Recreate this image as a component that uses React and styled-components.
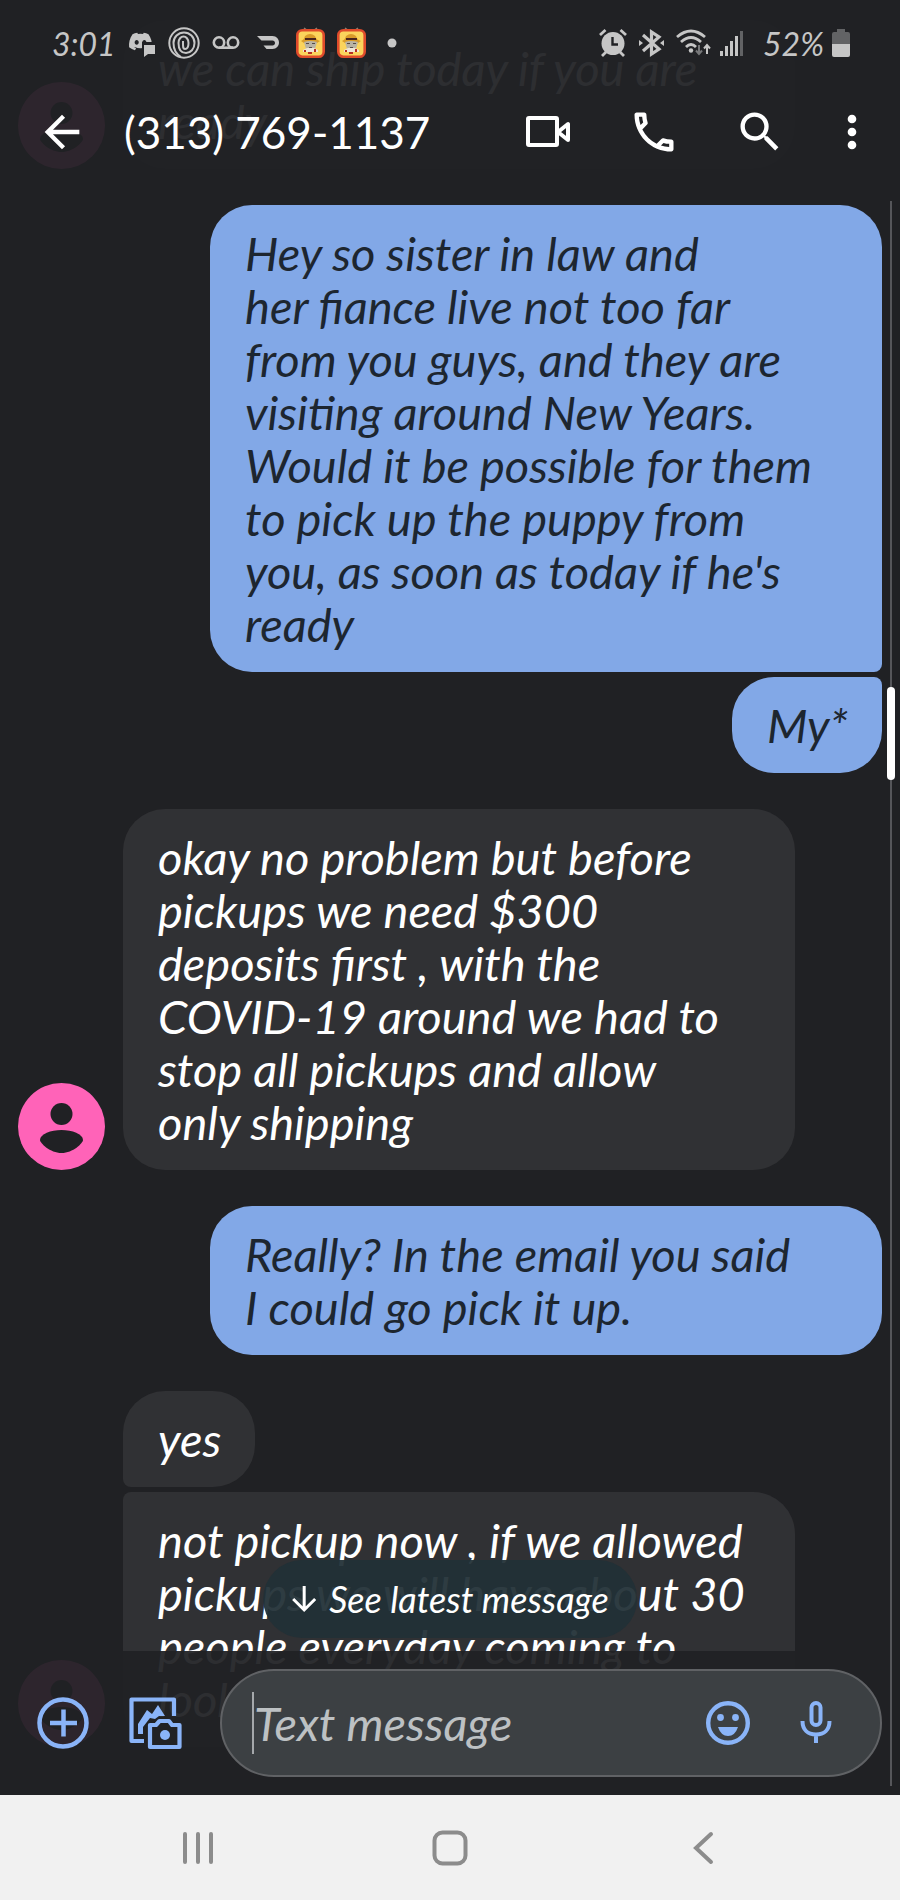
import styled, { createGlobalStyle, ThemeProvider } from "styled-components";
import { FaDiscord } from "react-icons/fa";
import { MdArrowBack, MdMoreVert, MdOutlinePhone, MdSearch } from "react-icons/md";

const theme = {
  colors: {
    background: "#202124",
    overlay: "rgba(32, 33, 36, 0.94)",
    incoming: "#303134",
    outgoing: "#82a8e7",
    outgoingText: "#1d2630",
    field: "#3c4043",
    fieldBorder: "#606265",
    accent: "#8ab4f8",
    avatar: "#ff63b8",
    status: "#c6c6c6",
    nav: "#f1f1f1",
    navIcon: "#8c8c8c",
  },
  fonts: {
    hand: "Lato, 'Open Sans', sans-serif",
  },
};

const GlobalStyle = createGlobalStyle`
  * {
    box-sizing: border-box;
  }
  body {
    margin: 0;
    background: #202124;
    font-family: Lato, "Open Sans", sans-serif;
  }
  svg {
    display: block;
    flex: none;
  }
`;

const Screen = styled.div`
  display: flex;
  flex-direction: column;
  min-height: 100vh;
  background: ${(props) => props.theme.colors.background};
`;

const Conversation = styled.main`
  position: relative;
  flex: 1;
  overflow: hidden;
`;

const TopOverlay = styled.header`
  position: absolute;
  top: 0;
  left: 0;
  right: 0;
  z-index: 2;
  padding-bottom: 19px;
  color: #fff;
  background: ${(props) => props.theme.colors.overlay};
`;

const StatusBar = styled.div`
  display: flex;
  justify-content: space-between;
  height: 84px;
  padding: 2px 50px 0 52px;
  color: ${(props) => props.theme.colors.status};
`;

const StatusGroup = styled.div`
  display: flex;
  align-items: center;
  gap: ${(props) => props.$gap}px;
`;

const StatusText = styled.span`
  width: ${(props) => props.$width}px;
  font-size: 32px;
  font-style: italic;
  text-align: ${(props) => props.$align || "left"};
  white-space: nowrap;
`;

const Toolbar = styled.div`
  display: flex;
  align-items: center;
  height: 96px;
  padding: 0 22px 0 36px;
`;

const IconButton = styled.button`
  display: flex;
  flex: none;
  padding: 0;
  border: 0;
  color: inherit;
  background: none;
  cursor: pointer;
`;

const Title = styled.h1`
  flex: 1;
  margin: 0 0 0 36px;
  font-size: 44px;
  font-weight: 400;
  line-height: 54px;
  white-space: nowrap;
`;

const Actions = styled.div`
  display: flex;
  gap: 54px;
  margin-right: 40px;
`;

const Thread = styled.ul`
  display: flex;
  flex-direction: column;
  margin: 0;
  padding: 20px 18px 48px;
  list-style: none;
`;

const MessageRow = styled.li`
  display: flex;
  align-items: flex-end;
  gap: 18px;
  margin-top: ${(props) => (props.$joined ? 5 : 36)}px;
  justify-content: ${(props) => (props.$mine ? "flex-end" : "flex-start")};
  padding: ${(props) => (props.$mine ? "0 0 0 192px" : "0 87px 0 0")};
  &:first-child {
    margin-top: 0;
  }
`;

const AvatarSlot = styled.div`
  flex: none;
  width: 87px;
`;

const Bubble = styled.p`
  flex: ${(props) => (props.$wide ? "1" : "none")};
  margin: 0;
  padding: 22px 34px 21px 35px;
  border-radius: ${(props) => props.$corners};
  font-family: ${(props) => props.theme.fonts.hand};
  font-size: 47px;
  font-style: italic;
  line-height: 53px;
  white-space: pre-line;
  color: ${(props) => (props.$mine ? props.theme.colors.outgoingText : "#fff")};
  background: ${(props) =>
    props.$mine ? props.theme.colors.outgoing : props.theme.colors.incoming};
`;

const LatestButton = styled.button`
  position: absolute;
  bottom: 157px;
  left: 50%;
  transform: translateX(-50%);
  z-index: 1;
  display: flex;
  align-items: center;
  gap: 12px;
  height: 78px;
  padding: 0 28px;
  border: 0;
  border-radius: 39px;
  font-family: ${(props) => props.theme.fonts.hand};
  font-size: 36px;
  font-style: italic;
  white-space: nowrap;
  color: #fff;
  background: rgba(33, 48, 54, 0.94);
`;

const ScrollTrack = styled.div`
  position: absolute;
  top: 201px;
  right: 8px;
  bottom: 9px;
  z-index: 3;
  width: 2px;
  background: #55565a;
`;

const ScrollThumb = styled.div`
  position: absolute;
  top: 486px;
  left: -3px;
  width: 8px;
  height: 93px;
  border-radius: 4px;
  background: #fff;
`;

const Composer = styled.form`
  position: absolute;
  right: 0;
  bottom: 0;
  left: 0;
  z-index: 2;
  display: flex;
  align-items: center;
  gap: 38px;
  height: 144px;
  padding: 0 18px 0 36px;
  color: ${(props) => props.theme.colors.accent};
  background: ${(props) => props.theme.colors.overlay};
`;

const Field = styled.div`
  display: flex;
  flex: 1;
  align-items: center;
  min-width: 0;
  height: 108px;
  padding: 0 40px 0 30px;
  border: 2px solid ${(props) => props.theme.colors.fieldBorder};
  border-radius: 54px;
  background: ${(props) => props.theme.colors.field};
`;

const Caret = styled.span`
  width: 2px;
  height: 62px;
  background: #a5a8ab;
`;

const TextInput = styled.input`
  flex: 1;
  min-width: 0;
  padding: 0;
  border: 0;
  outline: 0;
  font-family: ${(props) => props.theme.fonts.hand};
  font-size: 47px;
  font-style: italic;
  color: #fff;
  background: none;
  &::placeholder {
    color: #bdc1c3;
    opacity: 1;
  }
`;

const FieldIcons = styled.div`
  display: flex;
  gap: 40px;
`;

const NavBar = styled.nav`
  display: flex;
  justify-content: center;
  height: 105px;
  color: ${(props) => props.theme.colors.navIcon};
  background: ${(props) => props.theme.colors.nav};
`;

const NavButton = styled(IconButton)`
  width: 28%;
  align-items: center;
  justify-content: center;
`;

const messages = [
  { text: "we can ship today if you are\nready", wide: true, avatar: true },
  {
    text: "Hey so sister in law and\nher fiance live not too far\nfrom you guys, and they are\nvisiting around New Years.\nWould it be possible for them\nto pick up the puppy from\nyou, as soon as today if he's\nready",
    mine: true,
    wide: true,
    corners: "42px 42px 8px 42px",
  },
  { text: "My*", mine: true, joined: true, corners: "42px 8px 42px 42px" },
  {
    text: "okay no problem but before\npickups we need $300\ndeposits first , with the\nCOVID-19 around we had to\nstop all pickups and allow\nonly shipping",
    wide: true,
    avatar: true,
  },
  {
    text: "Really? In the email you said\nI could go pick it up.",
    mine: true,
    wide: true,
  },
  { text: "yes", corners: "42px 42px 42px 8px" },
  {
    text: "not pickup now , if we allowed\npickups we will have about 30\npeople everyday coming to\nlook",
    wide: true,
    joined: true,
    avatar: true,
    corners: "8px 42px 42px 42px",
  },
];

function Avatar() {
  return (
    <svg width="87" height="87" viewBox="0 0 87 87">
      <circle cx="43.5" cy="43.5" r="43.5" fill={theme.colors.avatar} />
      <circle cx="43.5" cy="31" r="11" fill={theme.colors.background} />
      <path
        d="M22 57C22 51 33 47 43.5 47S65 51 65 57C65 60 55 70 43.5 70S22 60 22 57Z"
        fill={theme.colors.background}
      />
    </svg>
  );
}

function DiscordIcon() {
  return (
    <svg width="28" height="32" viewBox="0 0 28 32">
      <FaDiscord x="0" y="2" size={25} />
      <path d="M14 15H30V31H14Z" fill={theme.colors.background} />
      <path d="M16 18H27V27H20L16 30Z" fill="currentColor" />
    </svg>
  );
}

function SpiralIcon() {
  return (
    <svg width="32" height="32" viewBox="0 0 32 32" fill="none" stroke="currentColor" strokeWidth="2">
      <circle cx="16" cy="16" r="14.7" />
      <path d="M13 30C8 27 5.5 22 5.5 16a10.5 10.5 0 0 1 21 0c0 6-4 10-8.500 10-5 0-7.500-4-7.500-10 0-4 2.500-6.500 5-6.500s5 2.500 5 6.500-1.500 6-3.500 6-2-2-2-5V14" />
    </svg>
  );
}

function VoicemailIcon() {
  return (
    <svg width="28" height="16" viewBox="0 0 28 16" fill="none" stroke="currentColor" strokeWidth="2.6">
      <circle cx="7" cy="7.5" r="5.2" />
      <circle cx="21" cy="7.5" r="5.2" />
      <path d="M7 12.7H21" />
    </svg>
  );
}

function DashIcon() {
  return (
    <svg width="32" height="16" viewBox="0 0 32 16">
      <path
        d="M5 1H20.5C24.5 1 27 4 27 7.500S24.5 14 20.5 14H14.5L11.5 10.500H20.5C22 10.5 23 9.300 23 8S22 5.5 20.5 5.500H9.500Z"
        fill="currentColor"
      />
    </svg>
  );
}

function GameIcon() {
  return (
    <svg width="29" height="32" viewBox="0 0 29 32">
      <path d="M8 1L12 4M21 1L17 4" stroke="#8e8075" strokeWidth="1.5" />
      <rect x="1.3" y="3.3" width="26.4" height="26.4" rx="5" fill="#fbd45c" stroke="#df4b2b" strokeWidth="2.6" />
      <path d="M5 14Q8 13 9 9Q14 5 19 9Q20 13 24 14L21 16H8Z" fill="#d99b2a" />
      <path d="M9 11H20V13H9Z" fill="#4a261d" />
      <path d="M8 15Q14 13 21 15L19 22Q14 25 10 22Z" fill="#b9b3a4" />
      <path d="M10 16H13V17H10ZM16 16H19V17H16ZM13 20H16V21H13Z" fill="#554c48" />
      <path d="M7 23L11 21H18L22 23V25H7Z" fill="#efe6d6" />
      <path d="M8 23H10V25H8ZM18 22H20V25H18ZM12 25H16V27H12Z" fill="#b72d23" />
    </svg>
  );
}

function DotIcon() {
  return (
    <svg width="20" height="10" viewBox="0 0 20 10">
      <circle cx="14" cy="5" r="4.5" fill="currentColor" />
    </svg>
  );
}

function AlarmIcon() {
  return (
    <svg width="32" height="30" viewBox="0 0 32 30" fill="none" stroke="currentColor" strokeWidth="2.8">
      <circle cx="15" cy="15.5" r="11.5" fill="currentColor" stroke="none" />
      <path d="M2 7L7.5 2M28 7L22.5 2M4 28L8 24M26 28L22 24" />
      <path d="M14.5 9V16.500H20" stroke={theme.colors.background} strokeWidth="2.4" />
    </svg>
  );
}

function BluetoothIcon() {
  return (
    <svg width="30" height="30" viewBox="0 0 30 30" fill="none" stroke="currentColor" strokeWidth="3.2">
      <path d="M5 7L21 21L13.5 26V4L21 9L5 23" />
      <path d="M1 12L5 15L1 18ZM26 12L22 15L26 18Z" fill="currentColor" stroke="none" />
    </svg>
  );
}

function WifiIcon() {
  return (
    <svg width="36" height="30" viewBox="0 0 36 30" fill="none" stroke="currentColor" strokeWidth="2.8">
      <path d="M1 9Q15 -3 29 9M5 14Q15 5 25 14M10 19Q15 14 20 19" />
      <circle cx="15" cy="22.5" r="2.2" fill="currentColor" stroke="none" />
      <path d="M23 17V26M20 22.500L23 26L26 22.500" stroke="#77787a" strokeWidth="2" />
      <path d="M31 26V17M28 20.500L31 17L34 20.500" strokeWidth="2" />
    </svg>
  );
}

function SignalIcon() {
  return (
    <svg width="24" height="28" viewBox="0 0 24 28" fill="currentColor">
      <path d="M0 22H3V27H0ZM5 17H8V27H5ZM10 12H13V27H10ZM15 7H18V27H15Z" />
      <path d="M20 2H23V27H20Z" opacity="0.4" />
    </svg>
  );
}

function BatteryIcon() {
  return (
    <svg width="18" height="28" viewBox="0 0 18 28">
      <path d="M5 0H13V3H16Q18 3 18 5V15H0V5Q0 3 2 3H5Z" fill="#626365" />
      <path d="M0 15H18V26Q18 28 16 28H2Q0 28 0 26Z" fill="currentColor" />
    </svg>
  );
}

function VideoIcon() {
  return (
    <svg width="52" height="52" viewBox="0 0 52 52" fill="none" stroke="currentColor" strokeWidth="4" strokeLinejoin="round">
      <rect x="6" y="12" width="29" height="27" rx="1" />
      <path d="M36 26L46 18V34Z" />
    </svg>
  );
}

function PlusIcon() {
  return (
    <svg width="54" height="54" viewBox="0 0 54 54" fill="none" stroke="currentColor" strokeWidth="4.5">
      <circle cx="27" cy="27" r="23.5" />
      <path d="M14 27H41M27.5 13.500V40.500" />
    </svg>
  );
}

function GalleryIcon() {
  return (
    <svg width="54" height="54" viewBox="0 0 54 54" fill="none" stroke="currentColor" strokeWidth="4.2" strokeLinejoin="round">
      <path d="M46 20V3.500H3.500V45H16" />
      <path
        d="M10 38V28L19 14L24 18L30 9L37 20H31L27 23L22 22L15 31V38Z"
        fill="currentColor"
        stroke="none"
      />
      <path d="M22 29H28L31.5 25H41L44 29H51.5V51H22Z" />
      <circle cx="37" cy="39" r="5" fill="currentColor" stroke="none" />
    </svg>
  );
}

function SmileIcon() {
  return (
    <svg width="48" height="48" viewBox="0 0 48 48" fill="currentColor">
      <circle cx="24" cy="24" r="19.8" fill="none" stroke="currentColor" strokeWidth="4.4" />
      <circle cx="16.5" cy="18.5" r="3.4" />
      <circle cx="31.5" cy="18.5" r="3.4" />
      <path d="M14 28H34Q31 37 24 37T14 28Z" />
    </svg>
  );
}

function MicIcon() {
  return (
    <svg width="48" height="48" viewBox="0 0 48 48" fill="none" stroke="currentColor" strokeWidth="4">
      <rect x="19.5" y="4" width="9" height="22" rx="4.5" />
      <path d="M10.5 22C10.5 31 16 35.500 24 35.500S37.5 31 37.5 22M24 35V44" />
    </svg>
  );
}

function Message({ message }) {
  const { text, mine, wide, joined, avatar, corners = "42px" } = message;
  return (
    <MessageRow $mine={mine} $joined={joined}>
      {!mine && <AvatarSlot>{avatar && <Avatar />}</AvatarSlot>}
      <Bubble $mine={mine} $wide={wide} $corners={corners}>
        {text}
      </Bubble>
    </MessageRow>
  );
}

function Header() {
  return (
    <TopOverlay>
      <StatusBar>
        <StatusGroup $gap={12}>
          <StatusText $width={64}>3:01</StatusText>
          <DiscordIcon />
          <SpiralIcon />
          <VoicemailIcon />
          <DashIcon />
          <GameIcon />
          <GameIcon />
          <DotIcon />
        </StatusGroup>
        <StatusGroup $gap={8}>
          <AlarmIcon />
          <BluetoothIcon />
          <WifiIcon />
          <SignalIcon />
          <StatusText $width={72} $align="right">
            52%
          </StatusText>
          <BatteryIcon />
        </StatusGroup>
      </StatusBar>
      <Toolbar>
        <IconButton aria-label="Back">
          <MdArrowBack size={52} />
        </IconButton>
        <Title>(313) 769-1137</Title>
        <Actions>
          <IconButton aria-label="Video call">
            <VideoIcon />
          </IconButton>
          <IconButton aria-label="Call">
            <MdOutlinePhone size={52} />
          </IconButton>
          <IconButton aria-label="Search">
            <MdSearch size={52} />
          </IconButton>
        </Actions>
        <IconButton aria-label="More options">
          <MdMoreVert size={52} />
        </IconButton>
      </Toolbar>
    </TopOverlay>
  );
}

function MessageComposer() {
  return (
    <Composer onSubmit={(e) => e.preventDefault()}>
      <IconButton type="button" aria-label="Attach">
        <PlusIcon />
      </IconButton>
      <IconButton type="button" aria-label="Gallery and camera">
        <GalleryIcon />
      </IconButton>
      <Field>
        <Caret />
        <TextInput type="text" placeholder="Text message" aria-label="Text message" />
        <FieldIcons>
          <IconButton type="button" aria-label="Emoji">
            <SmileIcon />
          </IconButton>
          <IconButton type="button" aria-label="Voice message">
            <MicIcon />
          </IconButton>
        </FieldIcons>
      </Field>
    </Composer>
  );
}

function SystemNav() {
  return (
    <NavBar>
      <NavButton aria-label="Recent apps">
        <svg width="36" height="36" viewBox="0 0 36 36" stroke="currentColor" strokeWidth="4" strokeLinecap="round">
          <path d="M5 4V32M18 4V32M31 4V32" />
        </svg>
      </NavButton>
      <NavButton aria-label="Home">
        <svg width="36" height="36" viewBox="0 0 36 36" fill="none" stroke="currentColor" strokeWidth="4">
          <rect x="2.5" y="2.5" width="31" height="31" rx="8" />
        </svg>
      </NavButton>
      <NavButton aria-label="Back">
        <svg width="36" height="36" viewBox="0 0 36 36" fill="none" stroke="currentColor" strokeWidth="4" strokeLinecap="round">
          <path d="M27 4L12 18L27 32" />
        </svg>
      </NavButton>
    </NavBar>
  );
}

function App() {
  return (
    <ThemeProvider theme={theme}>
      <GlobalStyle />
      <Screen>
        <Conversation>
          <Header />
          <Thread>
            {messages.map((message, i) => (
              <Message key={i} message={message} />
            ))}
          </Thread>
          <LatestButton type="button">
            <svg width="26" height="28" viewBox="0 0 26 28" fill="none" stroke="currentColor" strokeWidth="3">
              <path d="M13 1V25M2 14L13 25L24 14" />
            </svg>
            See latest message
          </LatestButton>
          <ScrollTrack>
            <ScrollThumb />
          </ScrollTrack>
          <MessageComposer />
        </Conversation>
        <SystemNav />
      </Screen>
    </ThemeProvider>
  );
}

export default App;
